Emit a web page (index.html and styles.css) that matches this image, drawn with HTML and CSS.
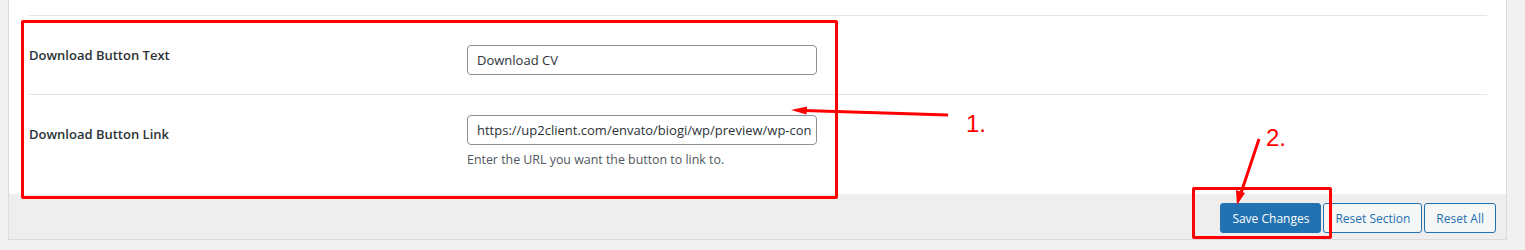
FILE: index.html
```html
<!DOCTYPE html>
<html lang="en">
<head>
  <meta charset="UTF-8">
  <title>Theme Options</title>
  <link rel="stylesheet" href="styles.css">
</head>
<body>

  <div class="wrap">
    <div class="panel">
      <div class="section">
        <div class="row row-first">
          <div class="label">Download Button Text</div>
          <div class="field">
            <input class="text-input" type="text" value="Download CV">
          </div>
        </div>
        <div class="row row-second">
          <div class="label">Download Button Link</div>
          <div class="field">
            <input class="text-input" type="text" value="https://up2client.com/envato/biogi/wp/preview/wp-content/uploads/cv.pdf">
            <p class="description">Enter the URL you want the button to link to.</p>
          </div>
        </div>
      </div>
      <div class="footer">
        <button class="btn btn-primary">Save Changes</button>
        <button class="btn">Reset Section</button>
        <button class="btn">Reset All</button>
      </div>
    </div>

    <!-- annotations drawn over the screenshot -->
    <div class="mark mark-fields"></div>
    <div class="mark mark-save"></div>
    <span class="step step-one">1.</span>
    <span class="step step-two">2.</span>
    <svg class="arrows" width="1525" height="250" viewBox="0 0 1525 250">
      <line x1="948" y1="115" x2="804" y2="110.5" stroke="#ff0000" stroke-width="3"/>
      <polygon points="791,110 807,106.5 806.5,114.5" fill="#ff0000"/>
      <line x1="1259" y1="139" x2="1241" y2="193" stroke="#ff0000" stroke-width="3"/>
      <polygon points="1237,205 1236,190 1245,193" fill="#ff0000"/>
    </svg>
  </div>

</body>
</html>
```

FILE: styles.css
```css
body {
  margin: 0;
  background: #f1f1f1;
  font-family: "Open Sans", "Noto Sans", sans-serif;
  color: #23282d;
}
.wrap {
  position: relative;
  width: 1525px;
  height: 250px;
  overflow: hidden;
  padding-left: 8px;
  box-sizing: border-box;
}
.panel {
  width: 1499px;
  box-sizing: border-box;
  background: #fff;
  border: 1px solid #dcdcde;
  border-top: none;
}
.section {
  padding: 15px 19px 0 20px;
}
.row {
  display: flex;
  border-top: 1px solid #e5e5e5;
}
.label {
  width: 438px;
  flex-shrink: 0;
  font-size: 13px;
  font-weight: 600;
  line-height: 20px;
  padding-top: 29px;
  color: #2c3338;
}
.row-first {
  height: 78px;
}
.row-first .field {
  padding-top: 29px;
}
.row-second {
  height: 99px;
}
.row-second .field {
  padding-top: 20px;
}
.text-input {
  display: block;
  width: 350px;
  height: 30px;
  box-sizing: border-box;
  border: 1px solid #8c8f94;
  border-radius: 4px;
  padding: 0 4px 0 9px;
  font-family: "Open Sans", "Noto Sans", sans-serif;
  font-size: 13px;
  color: #2c3338;
  background: #fff;
}
.description {
  margin: 6px 0 0;
  font-size: 12.4px;
  line-height: 18px;
  color: #50575e;
}
.footer {
  background: #eeeeee;
  height: 45px;
  padding: 9px 10px 0 0;
  box-sizing: border-box;
  display: flex;
  justify-content: flex-end;
  align-items: flex-start;
  gap: 2px;
}
.btn {
  height: 30px;
  padding: 0 11px;
  font-family: "Open Sans", "Noto Sans", sans-serif;
  font-size: 12px;
  color: #2271b1;
  background: #f6f7f7;
  border: 1px solid #2271b1;
  border-radius: 3px;
  cursor: pointer;
}
.btn-primary {
  background: #2271b1;
  color: #fff;
}

/* red markup */
.mark {
  position: absolute;
  border: 3px solid #ff0000;
  border-radius: 2px;
}
.mark-fields {
  left: 21px;
  top: 20px;
  width: 811px;
  height: 173px;
}
.mark-save {
  left: 1192px;
  top: 187px;
  width: 134px;
  height: 46px;
}
.step {
  position: absolute;
  font-family: "Liberation Sans", Arial, sans-serif;
  font-size: 24px;
  line-height: 24px;
  color: #ff0000;
}
.step-one {
  left: 966px;
  top: 112px;
}
.step-two {
  left: 1266px;
  top: 126px;
}
.arrows {
  position: absolute;
  left: 0;
  top: 0;
  pointer-events: none;
}
```
